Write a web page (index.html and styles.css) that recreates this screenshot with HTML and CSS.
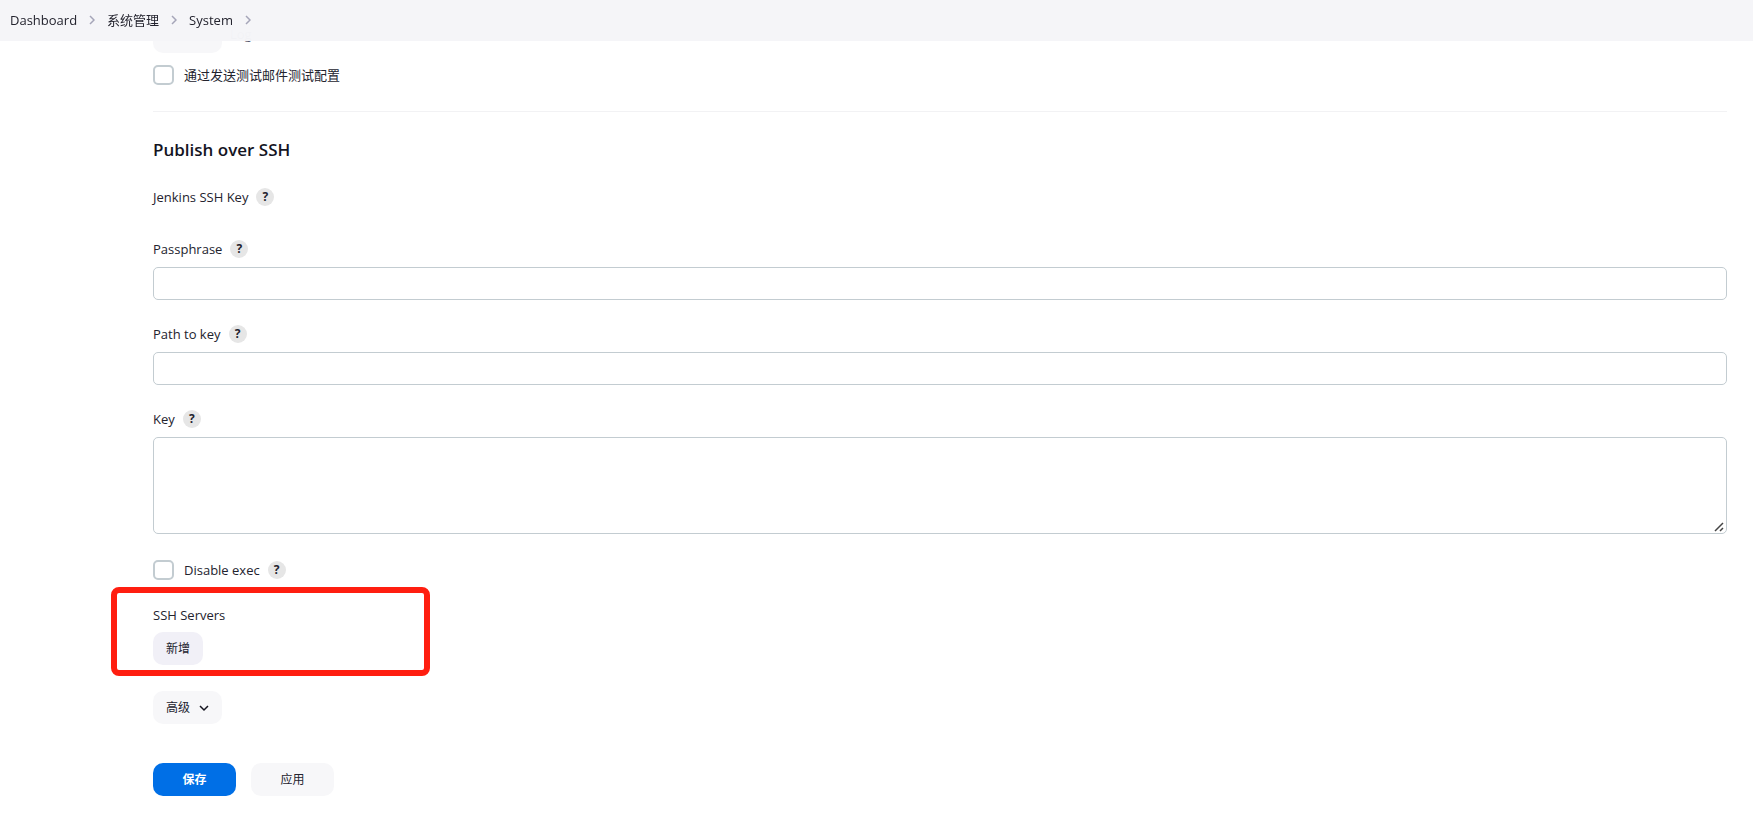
FILE: index.html
```html
<!DOCTYPE html>
<html lang="zh-CN">
<head>
    <meta charset="UTF-8">
    <meta name="viewport" content="width=device-width, initial-scale=1.0">
    <title>System - Jenkins</title>
    <link rel="stylesheet" href="styles.css">
</head>
<body>
    <nav class="breadcrumbs">
        <a href="#">Dashboard</a>
        <svg class="chevron" viewBox="0 0 6 10"><path d="M1 1l4 4-4 4"/></svg>
        <a href="#">系统管理</a>
        <svg class="chevron" viewBox="0 0 6 10"><path d="M1 1l4 4-4 4"/></svg>
        <a href="#">System</a>
        <svg class="chevron" viewBox="0 0 6 10"><path d="M1 1l4 4-4 4"/></svg>
    </nav>

    <main class="page">
        <form class="config">
            <div class="advanced-row">
                <button type="button" class="btn btn-light" aria-label="高级"></button>
                <span class="note">Log</span>
            </div>

            <div class="check-row">
                <input type="checkbox" id="testMail">
                <label for="testMail">通过发送测试邮件测试配置</label>
            </div>

            <section class="section">
                <h2>Publish over SSH</h2>

                <div class="label-row key-title">
                    <span>Jenkins SSH Key</span>
                    <button type="button" class="help">?</button>
                </div>

                <div class="field">
                    <div class="label-row">
                        <label for="passphrase">Passphrase</label>
                        <button type="button" class="help">?</button>
                    </div>
                    <input type="text" id="passphrase" class="input">
                </div>

                <div class="field">
                    <div class="label-row">
                        <label for="keyPath">Path to key</label>
                        <button type="button" class="help">?</button>
                    </div>
                    <input type="text" id="keyPath" class="input">
                </div>

                <div class="field">
                    <div class="label-row">
                        <label for="key">Key</label>
                        <button type="button" class="help">?</button>
                    </div>
                    <textarea id="key" class="input textarea"></textarea>
                </div>

                <div class="check-row">
                    <input type="checkbox" id="disableExec">
                    <label for="disableExec">Disable exec</label>
                    <button type="button" class="help">?</button>
                </div>

                <div class="servers">
                    <div class="label-row">SSH Servers</div>
                    <button type="button" class="btn">新增</button>
                    <div class="highlight"></div>
                </div>

                <button type="button" class="btn btn-light">
                    高级
                    <svg class="arrow" viewBox="0 0 10 8"><path d="M1 2l4 4 4-4"/></svg>
                </button>
            </section>

            <div class="actions">
                <button type="submit" class="btn btn-wide btn-primary">保存</button>
                <button type="button" class="btn btn-wide btn-light">应用</button>
            </div>
        </form>
    </main>
</body>
</html>
```

FILE: styles.css
```css
* {
    box-sizing: border-box;
}

body {
    margin: 0;
    background: #fff;
    color: #23232e;
    font-family: "Open Sans", "Noto Sans CJK SC", sans-serif;
    font-size: 13px;
    line-height: 20px;
}

button, input, textarea {
    font: inherit;
    color: inherit;
}

/* Breadcrumb bar */
.breadcrumbs {
    position: fixed;
    top: 0;
    left: 0;
    right: 0;
    z-index: 10;
    display: flex;
    align-items: center;
    gap: 12px;
    height: 41px;
    padding: 0 10px 2px;
    background: rgba(244, 244, 248, 0.95);
    backdrop-filter: blur(15px);
}

.breadcrumbs a {
    color: inherit;
    text-decoration: none;
}

.chevron {
    width: 6px;
    height: 10px;
    fill: none;
    stroke: #a5a5b8;
    stroke-width: 1.5;
}

/* Config form */
.page {
    padding: 20px 26px 24px 153px;
}

.advanced-row {
    display: flex;
    gap: 8px;
    height: 33px;
    margin-bottom: 12px;
    line-height: 28px;
}

.advanced-row .btn {
    width: 69px;
}

.note {
    color: #55556a;
}

.check-row {
    display: flex;
    align-items: center;
    height: 20px;
}

.check-row input {
    appearance: none;
    width: 21px;
    height: 20px;
    margin: 0 10px 0 0;
    border: 2px solid #c3ccd1;
    border-radius: 5px;
    background: #fff;
}

.section {
    margin-top: 26px;
    padding-top: 26px;
    border-top: 1px solid #f2f2f4;
}

h2 {
    margin: 0 0 25px;
    color: #14141f;
    font-size: 17px;
    font-weight: 600;
    line-height: 24px;
}

.label-row {
    display: flex;
    align-items: center;
    height: 20px;
}

.key-title {
    margin-bottom: 32px;
}

.help {
    width: 18px;
    height: 18px;
    margin-left: 8px;
    padding: 0;
    border: none;
    border-radius: 50%;
    background: #e6e6e6;
    font-size: 12px;
    font-weight: 700;
    line-height: 18px;
}

.field {
    margin-bottom: 24px;
}

.input {
    display: block;
    width: 100%;
    height: 33px;
    margin-top: 8px;
    padding: 6px 10px;
    border: 1px solid #c3ccd1;
    border-radius: 5px;
    background: #fff;
}

.textarea {
    height: 97px;
    margin-bottom: 26px;
    resize: vertical;
}

.textarea::-webkit-resizer {
    background: url("data:image/svg+xml,%3Csvg xmlns='http://www.w3.org/2000/svg' width='15' height='15'%3E%3Cpath d='M4 13l8-8M9 13l3-3' stroke='%23444' stroke-width='1.5'/%3E%3C/svg%3E") no-repeat right bottom;
}

.btn {
    height: 33px;
    padding: 0 13px;
    border: none;
    border-radius: 10px;
    background: #f1f0f7;
    font-size: 12px;
    cursor: pointer;
}

.btn-light {
    background: #f7f7f9;
}

.btn-wide {
    width: 83px;
}

.btn-primary {
    background: #006fe6;
    color: #fff;
    font-weight: 700;
}

.arrow {
    width: 10px;
    height: 8px;
    margin-left: 6px;
    fill: none;
    stroke: #14141f;
    stroke-width: 1.5;
}

.servers {
    position: relative;
    margin: 25px 0 26px;
}

.servers .btn {
    display: block;
    margin-top: 7px;
}

/* Red frame drawn over the servers block */
.highlight {
    position: absolute;
    top: -18px;
    left: -42px;
    width: 319px;
    height: 89px;
    border: 6px solid #ff1e10;
    border-radius: 8px;
    pointer-events: none;
}

.actions {
    display: flex;
    gap: 15px;
    margin-top: 39px;
}
```
